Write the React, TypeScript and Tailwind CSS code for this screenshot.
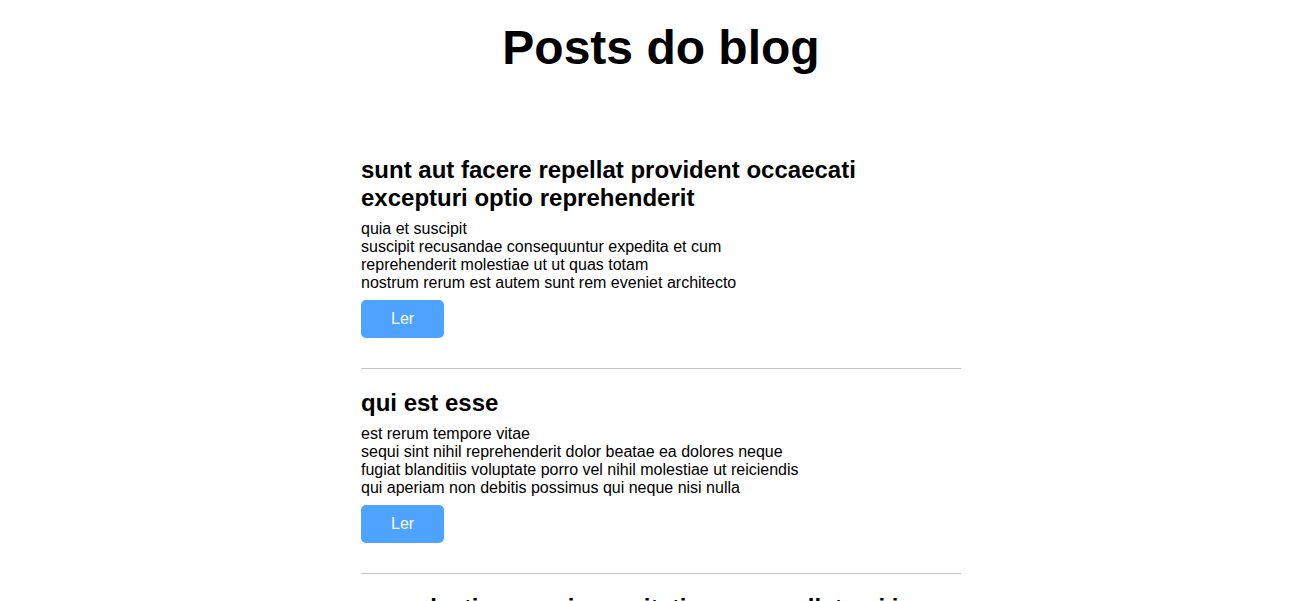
const posts = [
  {
    id: 1,
    title: "sunt aut facere repellat provident occaecati excepturi optio reprehenderit",
    body: "quia et suscipit\nsuscipit recusandae consequuntur expedita et cum\nreprehenderit molestiae ut ut quas totam\nnostrum rerum est autem sunt rem eveniet architecto",
  },
  {
    id: 2,
    title: "qui est esse",
    body: "est rerum tempore vitae\nsequi sint nihil reprehenderit dolor beatae ea dolores neque\nfugiat blanditiis voluptate porro vel nihil molestiae ut reiciendis\nqui aperiam non debitis possimus qui neque nisi nulla",
  },
  {
    id: 3,
    title: "ea molestias quasi exercitationem repellat qui ipsa sit aut",
    body: "et iusto sed quo iure\nvoluptatem occaecati omnis eligendi aut ad\nvoluptatem doloribus vel accusantium quis pariatur\nmolestiae porro eius odio et labore et velit aut",
  },
];

export default function App() {
  return (
    <div className="min-h-screen bg-white pl-[13px] font-['Liberation_Sans',Arial,sans-serif] text-black">
      <div className="mx-auto w-[600px]">
        <h1 className="pt-[20px] text-center text-[48px] font-bold leading-[normal]">Posts do blog</h1>
        <ul className="mt-[61px]">
          {posts.map((post) => (
            <li key={post.id} className="border-b border-[#c4c4c4] pt-[20px] pb-[30px]">
              <h2 className="text-[24px] font-bold leading-[normal]">{post.title}</h2>
              <p className="mt-2 whitespace-pre-line text-[16px] leading-[normal]">{post.body}</p>
              <button className="mt-2 rounded-[5px] bg-[#4da3ff] px-[30px] py-[10px] text-[16px] leading-[normal] text-white">
                Ler
              </button>
            </li>
          ))}
        </ul>
      </div>
    </div>
  );
}
